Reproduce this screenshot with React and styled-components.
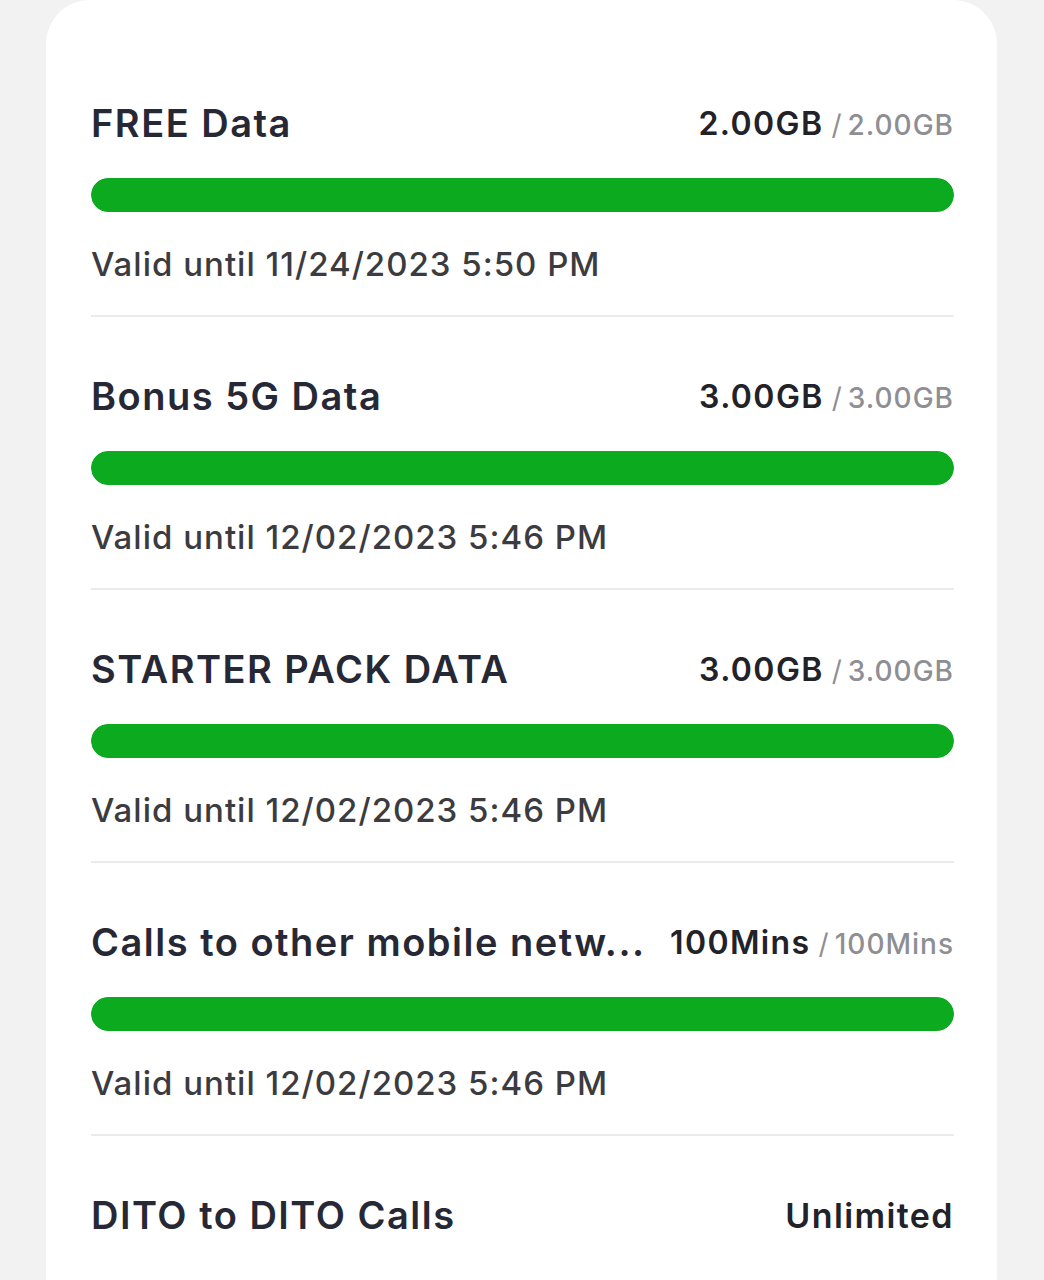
import React from "react";
import styled, { createGlobalStyle } from "styled-components";

const ColorText = "#272836";
const ColorSub = "#3b3b40";
const ColorMuted = "#8e8e93";
const ColorGreen = "#0caa1f";
const ColorLine = "#ebebeb";
const ColorBg = "#f2f2f2";

const GlobalStyle = createGlobalStyle`
  html, body {
    margin: 0;
    padding: 0;
    background: ${ColorBg};
    font-family: Inter, "Noto Sans", sans-serif;
  }
`;

const Page = styled.div`
  padding: 0 47px 0 46px;
  height: 1280px;
  overflow: hidden;
`;

const Card = styled.div`
  background: #ffffff;
  border-radius: 44px 44px 0 0;
  padding: 44px 43px 0 45px;
  min-height: 1280px;
  box-sizing: border-box;
`;

const Item = styled.div`
  padding: 56px 0 28px;
  border-bottom: 2px solid ${ColorLine};
  &:last-child {
    border-bottom: none;
  }
`;

const Head = styled.div`
  display: flex;
  align-items: center;
  justify-content: space-between;
  gap: 16px;
  height: 46px;
`;

const Title = styled.div`
  flex: 1;
  min-width: 0;
  font-size: 38px;
  font-weight: 600;
  color: ${ColorText};
  white-space: nowrap;
  overflow: hidden;
  text-overflow: ellipsis;
  letter-spacing: 1.5px;
`;

const Amount = styled.div`
  flex-shrink: 0;
  display: flex;
  align-items: baseline;
  white-space: nowrap;
`;

const Left = styled.span`
  font-size: ${(p) => (p.$big ? "34px" : "32px")};
  font-weight: 600;
  color: #222228;
  letter-spacing: 1.4px;
`;

const Slash = styled.span`
  font-size: 28px;
  font-weight: 400;
  color: ${ColorMuted};
  margin: 0 6px 0 8px;
`;

const Total = styled.span`
  font-size: 28px;
  font-weight: 500;
  color: ${ColorMuted};
  letter-spacing: 1px;
`;

const Bar = styled.div`
  margin-top: 32px;
  height: 34px;
  border-radius: 17px;
  background: #e6e6e6;
  overflow: hidden;
`;

const Fill = styled.div`
  height: 100%;
  background: ${ColorGreen};
  border-radius: 17px;
`;

const Valid = styled.div`
  margin-top: 29px;
  height: 46px;
  line-height: 46px;
  font-size: 33px;
  font-weight: 500;
  color: ${ColorSub};
  letter-spacing: 1px;
`;

const items = [
  { title: "FREE Data", left: "2.00GB", total: "2.00GB", pct: 100, until: "11/24/2023 5:50 PM" },
  { title: "Bonus 5G Data", left: "3.00GB", total: "3.00GB", pct: 100, until: "12/02/2023 5:46 PM" },
  { title: "STARTER PACK DATA", left: "3.00GB", total: "3.00GB", pct: 100, until: "12/02/2023 5:46 PM" },
  { title: "Calls to other mobile netw...", left: "100Mins", total: "100Mins", pct: 100, until: "12/02/2023 5:46 PM" },
];

const App = () => {
  return (
    <Page>
      <GlobalStyle />
      <Card>
        {items.map((it) => (
          <Item key={it.title}>
            <Head>
              <Title>{it.title}</Title>
              <Amount>
                <Left>{it.left}</Left>
                <Slash>/</Slash>
                <Total>{it.total}</Total>
              </Amount>
            </Head>
            <Bar>
              <Fill style={{ width: `${it.pct}%` }} />
            </Bar>
            <Valid>Valid until {it.until}</Valid>
          </Item>
        ))}
        <Item>
          <Head>
            <Title>DITO to DITO Calls</Title>
            <Amount>
              <Left $big>Unlimited</Left>
            </Amount>
          </Head>
        </Item>
      </Card>
    </Page>
  );
};

export default App;
